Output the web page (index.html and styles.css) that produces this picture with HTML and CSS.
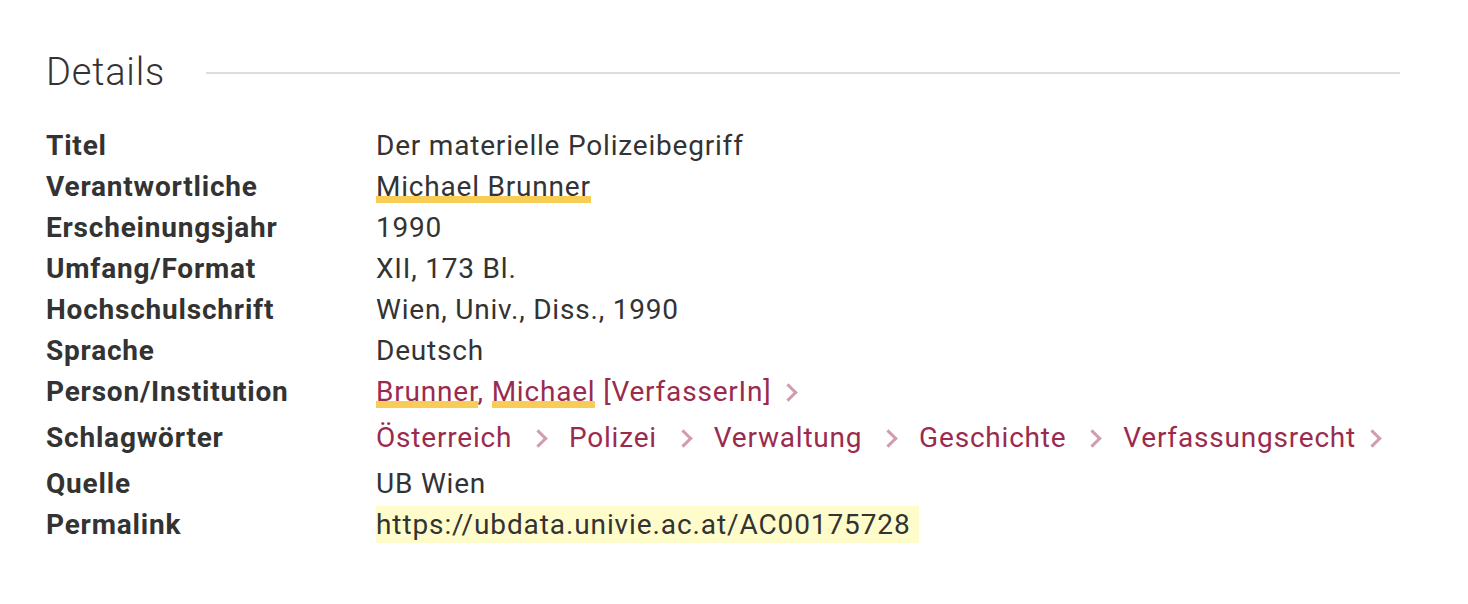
FILE: index.html
```html
<!DOCTYPE html>
<html lang="de">
<head>
    <meta charset="UTF-8">
    <title>Details</title>
    <link rel="stylesheet" href="styles.css">
</head>
<body>
    <section class="details">
        <div class="details-head">
            <h2 class="details-title">Details</h2>
            <span class="details-rule"></span>
        </div>

        <dl class="details-list">
            <dt>Titel</dt>
            <dd>Der materielle Polizeibegriff</dd>

            <dt>Verantwortliche</dt>
            <dd><span class="mark">Michael Brunner</span></dd>

            <dt>Erscheinungsjahr</dt>
            <dd>1990</dd>

            <dt>Umfang/Format</dt>
            <dd>XII, 173 Bl.</dd>

            <dt>Hochschulschrift</dt>
            <dd>Wien, Univ., Diss., 1990</dd>

            <dt>Sprache</dt>
            <dd>Deutsch</dd>

            <dt>Person/Institution</dt>
            <dd>
                <a class="link" href="#"><span class="mark">Brunner</span>, <span class="mark">Michael</span> [VerfasserIn]</a><span class="chevron chevron-tight"></span>
            </dd>

            <dt class="row-tall">Schlagwörter</dt>
            <dd class="row-tall">
                <a class="link" href="#">Österreich</a><span class="chevron"></span>
                <a class="link" href="#">Polizei</a><span class="chevron"></span>
                <a class="link" href="#">Verwaltung</a><span class="chevron"></span>
                <a class="link" href="#">Geschichte</a><span class="chevron"></span>
                <a class="link" href="#">Verfassungsrecht</a><span class="chevron chevron-tight"></span>
            </dd>

            <dt>Quelle</dt>
            <dd>UB Wien</dd>

            <dt>Permalink</dt>
            <dd><span class="permalink">https://ubdata.univie.ac.at/AC00175728</span></dd>
        </dl>
    </section>
</body>
</html>
```

FILE: styles.css
```css
:root {
    --text-color: #333333;
    --link-color: #9b2b4e;
    --chevron-color: #d49cab;
    --mark-color: #f7cd55;
    --permalink-bg: #fffccc;
    --rule-color: #dddddd;
}

* {
    margin: 0;
    padding: 0;
    box-sizing: border-box;
}

body {
    font-family: Roboto, "Liberation Sans", sans-serif;
    color: var(--text-color);
    background: #ffffff;
}

.details {
    padding: 48px 68px 0 46px;
}

.details-head {
    display: flex;
    align-items: center;
    gap: 41px;
    margin-bottom: 29px;
}

.details-title {
    font-size: 38px;
    font-weight: 300;
    line-height: 48px;
    letter-spacing: 0.8px;
}

.details-rule {
    flex: 1;
    height: 2px;
    background: var(--rule-color);
    margin-top: 2px;
}

.details-list {
    display: grid;
    grid-template-columns: 330px 1fr;
    font-size: 28px;
    line-height: 41px;
    letter-spacing: 0.8px;
}

.details-list dt {
    font-weight: 700;
}

.details-list .row-tall {
    padding: 5px 0;
}

.link {
    color: var(--link-color);
    text-decoration: none;
}

.mark {
    background: linear-gradient(var(--mark-color), var(--mark-color)) left bottom / 100% 7px no-repeat;
}

.chevron {
    display: inline-block;
    width: 13px;
    height: 13px;
    border-top: 3px solid var(--chevron-color);
    border-right: 3px solid var(--chevron-color);
    transform: rotate(45deg);
    margin: 0 16px 2px 20px;
    vertical-align: middle;
}

.chevron-tight {
    margin: 0 0 2px 10px;
}

.permalink {
    background: var(--permalink-bg);
    padding: 2px 8px 2px 0;
    letter-spacing: 0.9px;
}
```
